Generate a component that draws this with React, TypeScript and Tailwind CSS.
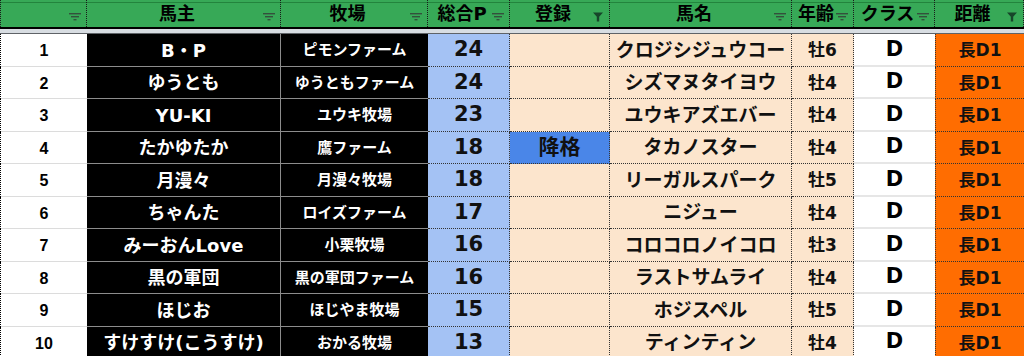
import React from "react";

const grid = "grid grid-cols-[87px_194px_147px_82px_100px_182px_62px_81px_89px]";

const heads = [
  { label: "", active: false },
  { label: "馬主", active: false },
  { label: "牧場", active: false },
  { label: "総合P", active: false },
  { label: "登録", active: true },
  { label: "馬名", active: false },
  { label: "年齢", active: false },
  { label: "クラス", active: false },
  { label: "距離", active: true },
];

const rows = [
  { no: 1, owner: "B・P", farm: "ピモンファーム", pt: 24, reg: "", horse: "クロジシジュウコー", age: "牡6" },
  { no: 2, owner: "ゆうとも", farm: "ゆうともファーム", pt: 24, reg: "", horse: "シズマヌタイヨウ", age: "牡4" },
  { no: 3, owner: "YU-KI", farm: "ユウキ牧場", pt: 23, reg: "", horse: "ユウキアズエバー", age: "牡4" },
  { no: 4, owner: "たかゆたか", farm: "鷹ファーム", pt: 18, reg: "降格", horse: "タカノスター", age: "牡4" },
  { no: 5, owner: "月漫々", farm: "月漫々牧場", pt: 18, reg: "", horse: "リーガルスパーク", age: "牡5" },
  { no: 6, owner: "ちゃんた", farm: "ロイズファーム", pt: 17, reg: "", horse: "ニジュー", age: "牡4" },
  { no: 7, owner: "みーおんLove", farm: "小栗牧場", pt: 16, reg: "", horse: "コロコロノイコロ", age: "牡3" },
  { no: 8, owner: "黒の軍団", farm: "黒の軍団ファーム", pt: 16, reg: "", horse: "ラストサムライ", age: "牡4" },
  { no: 9, owner: "ほじお", farm: "ほじやま牧場", pt: 15, reg: "", horse: "ホジスペル", age: "牡5" },
  { no: 10, owner: "すけすけ(こうすけ)", farm: "おかる牧場", pt: 13, reg: "", horse: "ティンティン", age: "牡4" },
];

function FilterIcon({ active }: { active: boolean }) {
  if (active) {
    return (
      <svg width="12" height="10" viewBox="0 0 12 10" className="mr-[5px] mt-[6px] shrink-0">
        <path d="M1 0.5h10L7.2 4.8V9.5H4.8V4.8Z" fill="#17462a" />
      </svg>
    );
  }
  return (
    <svg width="12" height="8" viewBox="0 0 12 8" className="mr-[5px] mt-[6px] shrink-0">
      <rect x="0" y="0" width="12" height="1.4" fill="#34503c" />
      <rect x="2" y="3" width="8" height="1.4" fill="#34503c" />
      <rect x="4.5" y="6" width="3" height="1.4" fill="#34503c" />
    </svg>
  );
}

export default function App() {
  return (
    <div className="w-[1024px] h-[356px] overflow-hidden bg-white font-['DejaVu_Sans','Noto_Sans_CJK_JP',sans-serif] font-bold leading-none">
      {/* Header */}
      <div className={`${grid} h-[27px] bg-[linear-gradient(to_bottom,#37a957_2px,#23843d_2px,#23843d_3px,#37a957_3px)]`}>
        {heads.map((h, i) => (
          <div
            key={i}
            className={`flex items-center border-r border-dotted border-[#1a1a1a] ${i === 0 ? "border-l" : ""}`}
          >
            <span className="flex-1 text-center text-[18px] text-black pl-[4px]">{h.label}</span>
            <FilterIcon active={h.active} />
          </div>
        ))}
      </div>
      <div className="h-[2px] bg-black" />
      <div className="h-[4px] bg-[#d8dde2]" />
      <div className="h-[1px] bg-[#5f6368]" />

      {/* Body */}
      {rows.map((r) => (
        <div key={r.no} className={`${grid} h-[32.5px] pt-0`}>
          <div className="flex items-center justify-center bg-white border-l border-dotted border-l-black shadow-[inset_0_-1px_0_#dcdcdc] font-['Liberation_Sans',sans-serif] text-[16px] text-black pt-[2px]">
            {r.no}
          </div>
          <div className="flex items-center justify-center bg-black text-white text-[18px] border-b border-r border-[#8c8c8c] whitespace-nowrap pt-[2px]">
            {r.owner}
          </div>
          <div className="flex items-center justify-center bg-black text-white text-[15px] border-b border-[#8c8c8c] whitespace-nowrap pt-[2px]">
            {r.farm}
          </div>
          <div className="flex items-center justify-center bg-[#a4c2f4] text-[21px] text-[#111] border-b border-r border-dotted border-[#333]">
            {r.pt}
          </div>
          <div
            className={`flex items-center justify-center text-[21px] text-[#111] border-b border-r border-dotted border-[#333] ${
              r.reg ? "bg-[#4a86e8]" : "bg-[#fce5cd]"
            }`}
          >
            {r.reg}
          </div>
          <div className="flex items-center justify-center bg-[#fce5cd] text-[19px] text-[#111] border-b border-r border-dotted border-[#333] whitespace-nowrap pt-[1px]">
            {r.horse}
          </div>
          <div className="flex items-center justify-center bg-[#fce5cd] text-[17px] text-[#111] border-b border-r border-dotted border-[#333] pt-[2px]">
            {r.age}
          </div>
          <div className="flex items-center justify-center bg-white text-[21px] text-black shadow-[inset_0_-2px_0_#e6e6e6] pb-[2px]">
            D
          </div>
          <div className="flex items-center justify-center bg-[#ff6d01] text-[17px] text-[#111] border-b border-l border-dotted border-[#333] pt-[2px]">
            長D1
          </div>
        </div>
      ))}
    </div>
  );
}
